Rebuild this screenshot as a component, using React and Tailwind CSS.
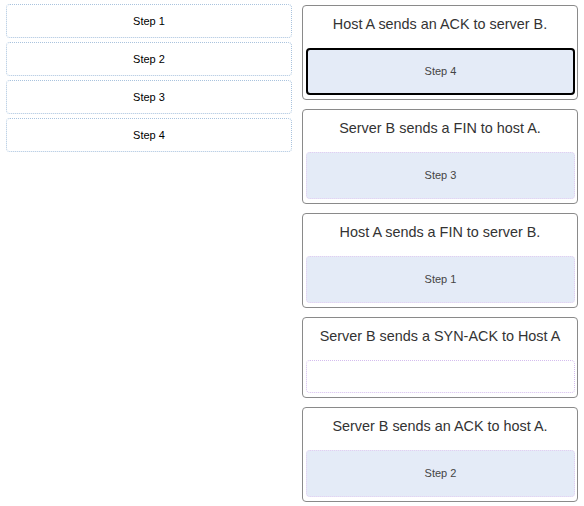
import React from "react";

const steps = ["Step 1", "Step 2", "Step 3", "Step 4"];

const cards = [
  { title: "Host A sends an ACK to server B.", value: "Step 4", active: true },
  { title: "Server B sends a FIN to host A.", value: "Step 3" },
  { title: "Host A sends a FIN to server B.", value: "Step 1" },
  { title: "Server B sends a SYN-ACK to Host A", value: null },
  { title: "Server B sends an ACK to host A.", value: "Step 2" },
];

export default function App() {
  return (
    <div
      className="flex w-[584px] h-[506px] bg-white pt-[4px]"
      style={{ fontFamily: '"Liberation Sans", Arial, sans-serif' }}
    >
      <div className="ml-[6px] w-[286px] flex flex-col gap-[4px]">
        {steps.map((s) => (
          <div
            key={s}
            className="h-[34px] pt-[1px] flex items-center justify-center rounded-[4px] border border-dotted border-[#a9c3de] text-[11px] text-black"
          >
            {s}
          </div>
        ))}
      </div>
      <div className="ml-[10px] mt-[1px] w-[276px] flex flex-col gap-[9px]">
        {cards.map((c) => (
          <div
            key={c.title}
            className="border border-[#8a8a8a] rounded-[4px] flex flex-col pb-[4px]"
          >
            <div className="h-[42px] pt-[9px] leading-[18px] text-center text-[14.4px] text-[#333]">
              {c.title}
            </div>
            {c.value ? (
              <div
                className={
                  "ml-[3px] mr-[2px] h-[47px] flex items-center justify-center rounded-[4px] bg-[#e4ebf7] text-[11px] text-[#444] " +
                  (c.active
                    ? "border-2 border-black"
                    : "border border-dotted border-[#e2cdf2]")
                }
              >
                {c.value}
              </div>
            ) : (
              <div className="ml-[3px] mr-[2px] h-[33px] rounded-[4px] border border-dotted border-[#d4bdee]" />
            )}
          </div>
        ))}
      </div>
    </div>
  );
}
